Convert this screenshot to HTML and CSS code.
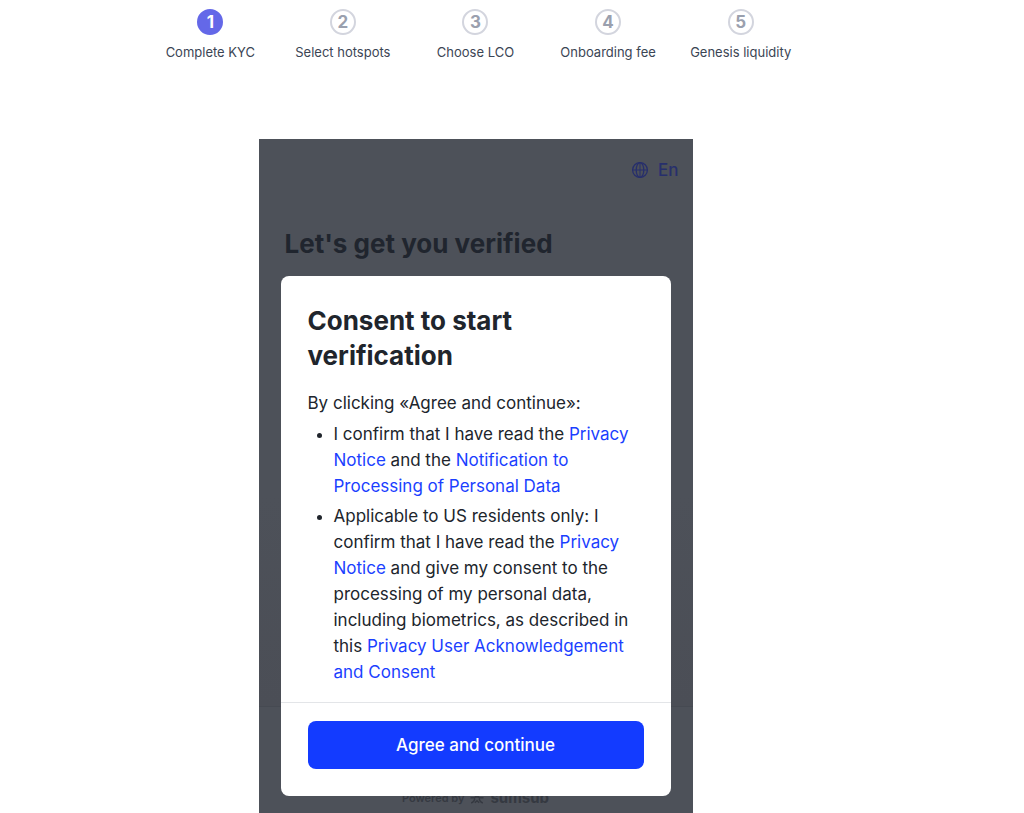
FILE: index.html
```html
<!DOCTYPE html>
<html lang="en">
<head>
<meta charset="utf-8">
<meta name="viewport" content="width=device-width, initial-scale=1">
<title>Complete KYC</title>
<link rel="stylesheet" href="styles.css">
</head>
<body>
<main class="page">
  <ol class="steps">
    <li class="step step-active" aria-current="step"><span class="step-number">1</span><span class="step-label">Complete KYC</span></li>
    <li class="step"><span class="step-number">2</span><span class="step-label">Select hotspots</span></li>
    <li class="step"><span class="step-number">3</span><span class="step-label">Choose LCO</span></li>
    <li class="step"><span class="step-number">4</span><span class="step-label">Onboarding fee</span></li>
    <li class="step"><span class="step-number">5</span><span class="step-label">Genesis liquidity</span></li>
  </ol>

  <section class="panel">
    <div class="backdrop">
      <header class="panel-header">
        <button class="language" type="button">
          <svg class="globe" viewBox="0 0 18 18" aria-hidden="true">
            <circle cx="9" cy="9" r="7.4"/>
            <ellipse cx="9" cy="9" rx="3.8" ry="7.4"/>
            <path d="M9 1.600v14.800M1.600 9h14.800" stroke-width="1"/>
          </svg>
          En
        </button>
      </header>
      <h1 class="panel-title">Let's get you verified</h1>
      <div class="panel-body"></div>
      <footer class="powered">
        <span>Powered by</span>
        <svg class="powered-mark" viewBox="0 0 14 14" aria-hidden="true">
          <path d="M1.500 2.500 7 6l5.500-3.500M.5 6.800h3.800L7 5.500l2.700 1.300h3.800M4.800 6.800c0 2.600-1.300 4.400-3.600 5.200M9.200 6.800c0 2.600 1.300 4.400 3.600 5.200M4.800 11.800 7 9.800l2.200 2"/>
        </svg>
        <span class="powered-name">sumsub</span>
      </footer>
    </div>

    <div class="dialog-layer">
      <div class="dialog" role="dialog" aria-modal="true" aria-labelledby="consent-title">
        <div class="dialog-content">
          <h2 class="dialog-title" id="consent-title">Consent to start verification</h2>
          <p class="dialog-intro">By clicking «Agree and continue»:</p>
          <ul class="terms">
            <li>I confirm that I have read the <a href="#">Privacy Notice</a> and the <a href="#">Notification to Processing of Personal Data</a></li>
            <li>Applicable to US residents only: I confirm that I have read the <a href="#">Privacy Notice</a> and give my consent to the processing of my personal data, including biometrics, as described in this <a href="#">Privacy User Acknowledgement and Consent</a></li>
          </ul>
        </div>
        <div class="dialog-actions">
          <button class="agree" type="button">Agree and continue</button>
        </div>
      </div>
    </div>
  </section>
</main>
</body>
</html>
```

FILE: styles.css
```css
* {
  box-sizing: border-box;
}

body {
  margin: 0;
  background: #fff;
  color: #20252c;
  font-family: Inter, "Liberation Sans", sans-serif;
}

.page {
  display: flex;
  flex-direction: column;
  align-items: center;
  min-height: 100vh;
  padding: 9px 73px 0 0;
}

.steps {
  display: grid;
  grid-template-columns: repeat(5, 1fr);
  width: 100%;
  max-width: 663px;
  margin: 0 0 78px;
  padding: 0;
  list-style: none;
}

.step {
  display: flex;
  flex-direction: column;
  align-items: center;
  gap: 8px;
}

.step-number {
  display: flex;
  align-items: center;
  justify-content: center;
  width: 26px;
  height: 26px;
  border: 2px solid #d3d5de;
  border-radius: 50%;
  color: #9aa0ae;
  font-size: 17px;
  font-weight: 700;
  line-height: 22px;
}

.step-active .step-number {
  border-color: #6468e8;
  background: #6468e8;
  color: #fff;
}

.step-label {
  color: #3b4554;
  font-size: 13px;
  line-height: 18px;
  text-align: center;
}

.panel {
  display: grid;
  flex: 1;
  width: 100%;
  max-width: 434px;
  background: #4d5159;
}

.backdrop,
.dialog-layer {
  grid-area: 1 / 1;
}

.backdrop {
  display: flex;
  flex-direction: column;
}

.panel-header {
  display: flex;
  justify-content: flex-end;
  padding: 18px 14px;
}

.language {
  display: flex;
  align-items: center;
  gap: 9px;
  padding: 0;
  border: 0;
  background: none;
  color: #272f6c;
  font: 500 17px/26px Inter, sans-serif;
}

.globe {
  width: 18px;
  height: 18px;
  fill: none;
  stroke: currentColor;
  stroke-width: 1.3;
}

.panel-title {
  margin: 26px 26px 0;
  color: #20252e;
  font-size: 26px;
  line-height: 34px;
}

.panel-body {
  flex: 1;
  margin-top: 24px;
  border-bottom: 1px solid #464a52;
  background: linear-gradient(#4d5159 50%, #4b4e56);
}

.powered {
  display: flex;
  align-items: flex-end;
  justify-content: center;
  gap: 6px;
  height: 106px;
  padding-bottom: 8px;
  color: #353941;
  font-size: 11px;
  font-weight: 600;
  line-height: 14px;
}

.powered-mark {
  width: 14px;
  height: 14px;
  fill: none;
  stroke: currentColor;
  stroke-width: 1.4;
}

.powered-name {
  font-size: 15px;
  font-weight: 700;
}

.dialog-layer {
  z-index: 1;
  padding: 137px 22px 16px;
}

.dialog {
  border-radius: 8px;
  background: #fff;
}

.dialog-content {
  padding: 27px 27px 17px;
}

.dialog-title {
  margin: 0 0 17px;
  font-size: 26px;
  line-height: 35px;
}

.dialog-intro {
  margin: 0 0 5px;
  font-size: 17px;
  line-height: 26px;
}

.terms {
  display: flex;
  flex-direction: column;
  gap: 4px;
  margin: 0;
  padding-left: 26px;
  font-size: 17px;
  line-height: 26px;
}

.terms a {
  color: #1b3fff;
  text-decoration: none;
}

.dialog-actions {
  padding: 18px 27px 27px;
  border-top: 1px solid #e3e5e8;
}

.agree {
  width: 100%;
  height: 48px;
  border: 0;
  border-radius: 8px;
  background: #133bff;
  color: #fff;
  font: 500 17px/26px Inter, sans-serif;
}
```
